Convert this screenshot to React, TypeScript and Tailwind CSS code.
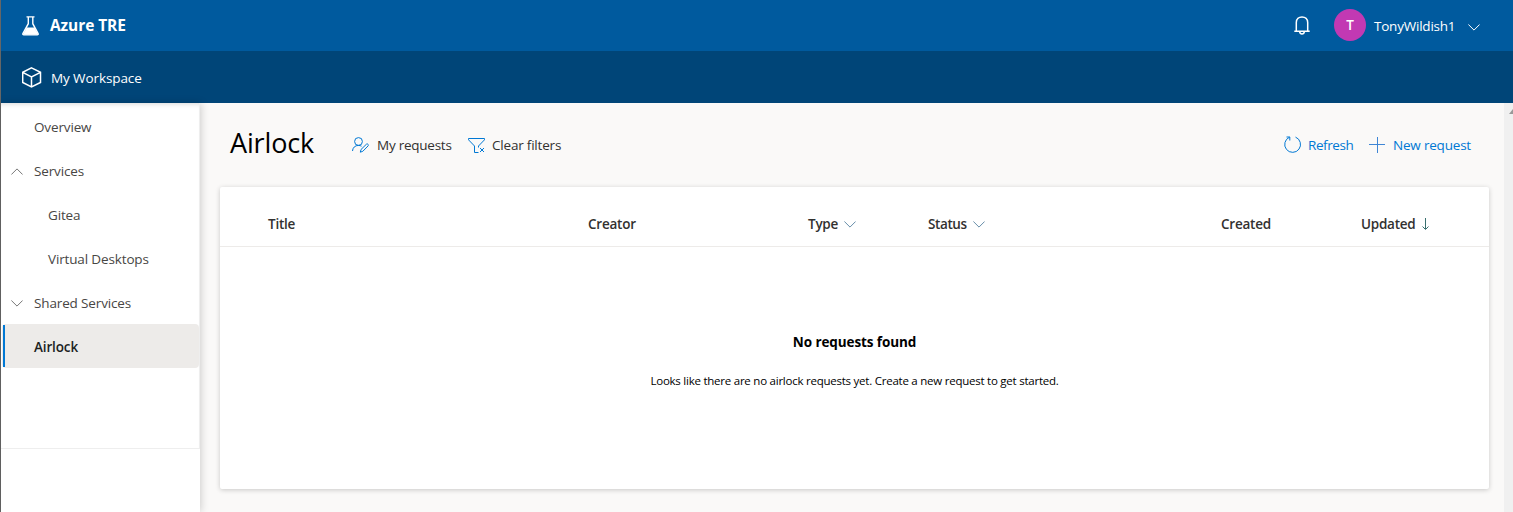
import type { ReactNode } from "react";

type IconProps = { className?: string };

function Flask({ className }: IconProps) {
  return (
    <svg className={className} width="18" height="20" viewBox="0 0 18 20" fill="none" stroke="white" strokeWidth="1.4">
      <path d="M4.500 .9h8M6.300 .9v6.800L1 17.300c-.5.9 0 1.600.8 1.600h13.400c.8 0 1.300-.7.8-1.600L10.800 7.700V.9" />
      <path d="M4.700 11.500h7.700l4 7.300H.8z" fill="white" stroke="none" />
    </svg>
  );
}

function Cube({ className }: IconProps) {
  return (
    <svg className={className} width="20" height="21" viewBox="0 0 20 21" fill="none" stroke="white" strokeWidth="1.5">
      <path d="M9.500 .9 18.500 5.300v10.200L9.500 20 .700 15.500V5.300zM.700 5.300l8.800 4.500 9-4.500M9.500 9.800V20" />
    </svg>
  );
}

function Bell({ className }: IconProps) {
  return (
    <svg className={className} width="16" height="19" viewBox="0 0 16 19" fill="none" stroke="white" strokeWidth="1.5">
      <path d="M.3 15.300h15.400M2.300 15.300V6.500C2.300 3 4.800.9 8 .9s5.700 2.100 5.700 5.600v8.800M5.700 15.500c0 1.500 1 2.400 2.300 2.400s2.300-.9 2.300-2.400" />
    </svg>
  );
}

function Chevron({ className }: IconProps) {
  return (
    <svg className={className} width="12" height="7" viewBox="0 0 12 7" fill="none" stroke="currentColor">
      <path d="M.4.500 6 6.100 11.600.500" />
    </svg>
  );
}

function UserEdit() {
  return (
    <svg width="17" height="16" viewBox="0 0 17 16" fill="none" stroke="#0078d4">
      <circle cx="6.500" cy="4.500" r="3.900" />
      <path d="M.5 14c.2-3.300 2.500-5.600 6-5.600 1.200 0 2.200.3 3 .8M8.300 15.200l.7-2.700 5.300-5.200c.5-.5 1.300-.5 1.700 0 .5.500.5 1.200 0 1.700l-5.200 5.300z" />
    </svg>
  );
}

function FilterClear() {
  return (
    <svg width="17" height="15" viewBox="0 0 17 15" fill="none" stroke="#0078d4">
      <path d="M10.500 14.500h-4V8L.5 1.800V.500h16v1.300L10.500 8v1.500M12 10l4 4M16 10l-4 4" />
    </svg>
  );
}

function Refresh() {
  return (
    <svg width="17" height="17" viewBox="0 0 17 17" fill="none" stroke="#0078d4">
      <path d="M11.500 1.100A7.900 7.900 0 1 1 5.500 1.200M2.500 1h3.300v3.500" />
    </svg>
  );
}

function Plus() {
  return (
    <svg width="16" height="16" viewBox="0 0 16 16" fill="none" stroke="#3f86d5">
      <path d="M8.500 0v16M0 7.500h16" />
    </svg>
  );
}

function SortDown() {
  return (
    <svg width="7" height="12" viewBox="0 0 7 12" fill="none" stroke="#39706f">
      <path d="M3.500 0v11M.5 8.500l3 3 3-3" />
    </svg>
  );
}

function NavRow({ children, indent, icon }: { children: ReactNode; indent?: boolean; icon?: ReactNode }) {
  return (
    <div className="flex h-11 items-center text-[#484644]">
      <div className="flex w-[33px] shrink-0 pl-[10px] text-[#777]">{icon}</div>
      <span className={indent ? "pl-[14px]" : ""}>{children}</span>
    </div>
  );
}

export default function App() {
  return (
    <div className="flex h-[512px] w-full overflow-hidden bg-[#666] pl-px font-['Open_Sans','Noto_Sans',sans-serif] text-[13.5px] leading-5 tracking-[-0.14px] whitespace-nowrap">
      <div className="flex min-w-0 grow flex-col bg-[#faf9f8]">
        <header className="flex h-[51px] shrink-0 items-center bg-[#005a9e] text-white">
          <Flask className="ml-[21px]" />
          <span className="-mt-px ml-[10px] text-[15.500px] font-bold tracking-[-0.08px]">Azure TRE</span>
          <Bell className="-mt-px ml-auto" />
          <div className="-mt-px ml-6 flex size-8 items-center justify-center rounded-full bg-[#c239b3] font-semibold">T</div>
          <span className="mt-px ml-2 w-[82px] tracking-[-0.22px]">TonyWildish1</span>
          <Chevron className="mt-[3px] mr-[33px] ml-3" />
        </header>
        <div className="flex h-[52px] shrink-0 items-center bg-[#004578] text-white">
          <Cube className="ml-[21px]" />
          <span className="mt-[2px] ml-[9px] tracking-[-0.1px]">My Workspace</span>
        </div>
        <div className="flex min-h-0 grow">
          <aside className="relative w-[199px] shrink-0 bg-white shadow-[1px_0_8px_rgba(0,0,0,0.18)]">
            <nav className="flex h-[346px] flex-col border-r border-b border-[#eee] pt-[2px] shadow-[inset_0_5px_5px_-4px_rgba(0,0,0,0.16)]">
              <NavRow>Overview</NavRow>
              <NavRow icon={<Chevron className="rotate-180" />}>Services</NavRow>
              <NavRow indent>Gitea</NavRow>
              <NavRow indent>Virtual Desktops</NavRow>
              <NavRow icon={<Chevron />}>Shared Services</NavRow>
              <div className="mt-[-1px] ml-px flex h-[44px] items-center rounded-sm bg-[#edebe9]">
                <div className="ml-px h-[42px] w-[2px] bg-[#0078d4]" />
                <span className="mt-[2px] ml-[29px] font-semibold text-[#201f1e]">Airlock</span>
              </div>
            </nav>
          </aside>
          <main className="flex min-w-0 grow flex-col px-5 pr-[14px]">
            <div className="flex h-[84px] items-center text-[#323130]">
              <h1 className="-mt-[5px] ml-[10px] w-[122px] text-[27px] font-normal tracking-[-0.15px] text-black">Airlock</h1>
              <UserEdit />
              <span className="ml-2 w-[76px] tracking-[-0.25px]">My requests</span>
              <span className="ml-[15px] flex"><FilterClear /></span>
              <span className="ml-[7px] tracking-[-0.2px]">Clear filters</span>
              <div className="mr-[18px] ml-auto flex items-center text-[#0078d4]">
                <span className="-mt-px flex"><Refresh /></span>
                <span className="ml-[7px] w-[46px] tracking-[-0.4px]">Refresh</span>
                <span className="ml-[15px] flex"><Plus /></span>
                <span className="ml-2 w-[79px] tracking-[-0.2px]">New request</span>
              </div>
            </div>
            <section className="mr-[1px] flex h-[302px] flex-col rounded-[2px] bg-white shadow-[0_1px_5px_rgba(0,0,0,0.2)]">
              <div className="flex h-[60px] items-center border-b border-[#edebe9] pt-[15px] pl-12 font-semibold tracking-[-0.24px] text-[#323130]">
                <span className="w-80">Title</span>
                <span className="w-[220px]">Creator</span>
                <span className="flex w-[120px] items-center"><span className="w-[36px]">Type</span><Chevron className="text-[#668da8]" /></span>
                <span className="flex w-[293px] items-center"><span className="w-[45px] tracking-[-0.4px]">Status</span><Chevron className="text-[#668da8]" /></span>
                <span className="w-[140px]">Created</span>
                <span className="flex items-center"><span className="w-[61px]">Updated</span><SortDown /></span>
              </div>
              <div className="flex flex-col items-center pt-[85px] text-black">
                <h2 className="text-[13.5px] leading-5 font-bold tracking-[-0.1px]">No requests found</h2>
                <p className="mt-[19px] text-[11.500px] tracking-[-0.24px]">Looks like there are no airlock requests yet. Create a new request to get started.</p>
              </div>
            </section>
          </main>
          <div className="flex w-[9px] shrink-0 justify-end overflow-hidden bg-[#f0f0f0] pt-[6px]">
            <svg width="4" height="5" viewBox="0 0 4 5" fill="#999"><path d="M0 5 4 0v5z" /></svg>
          </div>
        </div>
      </div>
    </div>
  );
}
